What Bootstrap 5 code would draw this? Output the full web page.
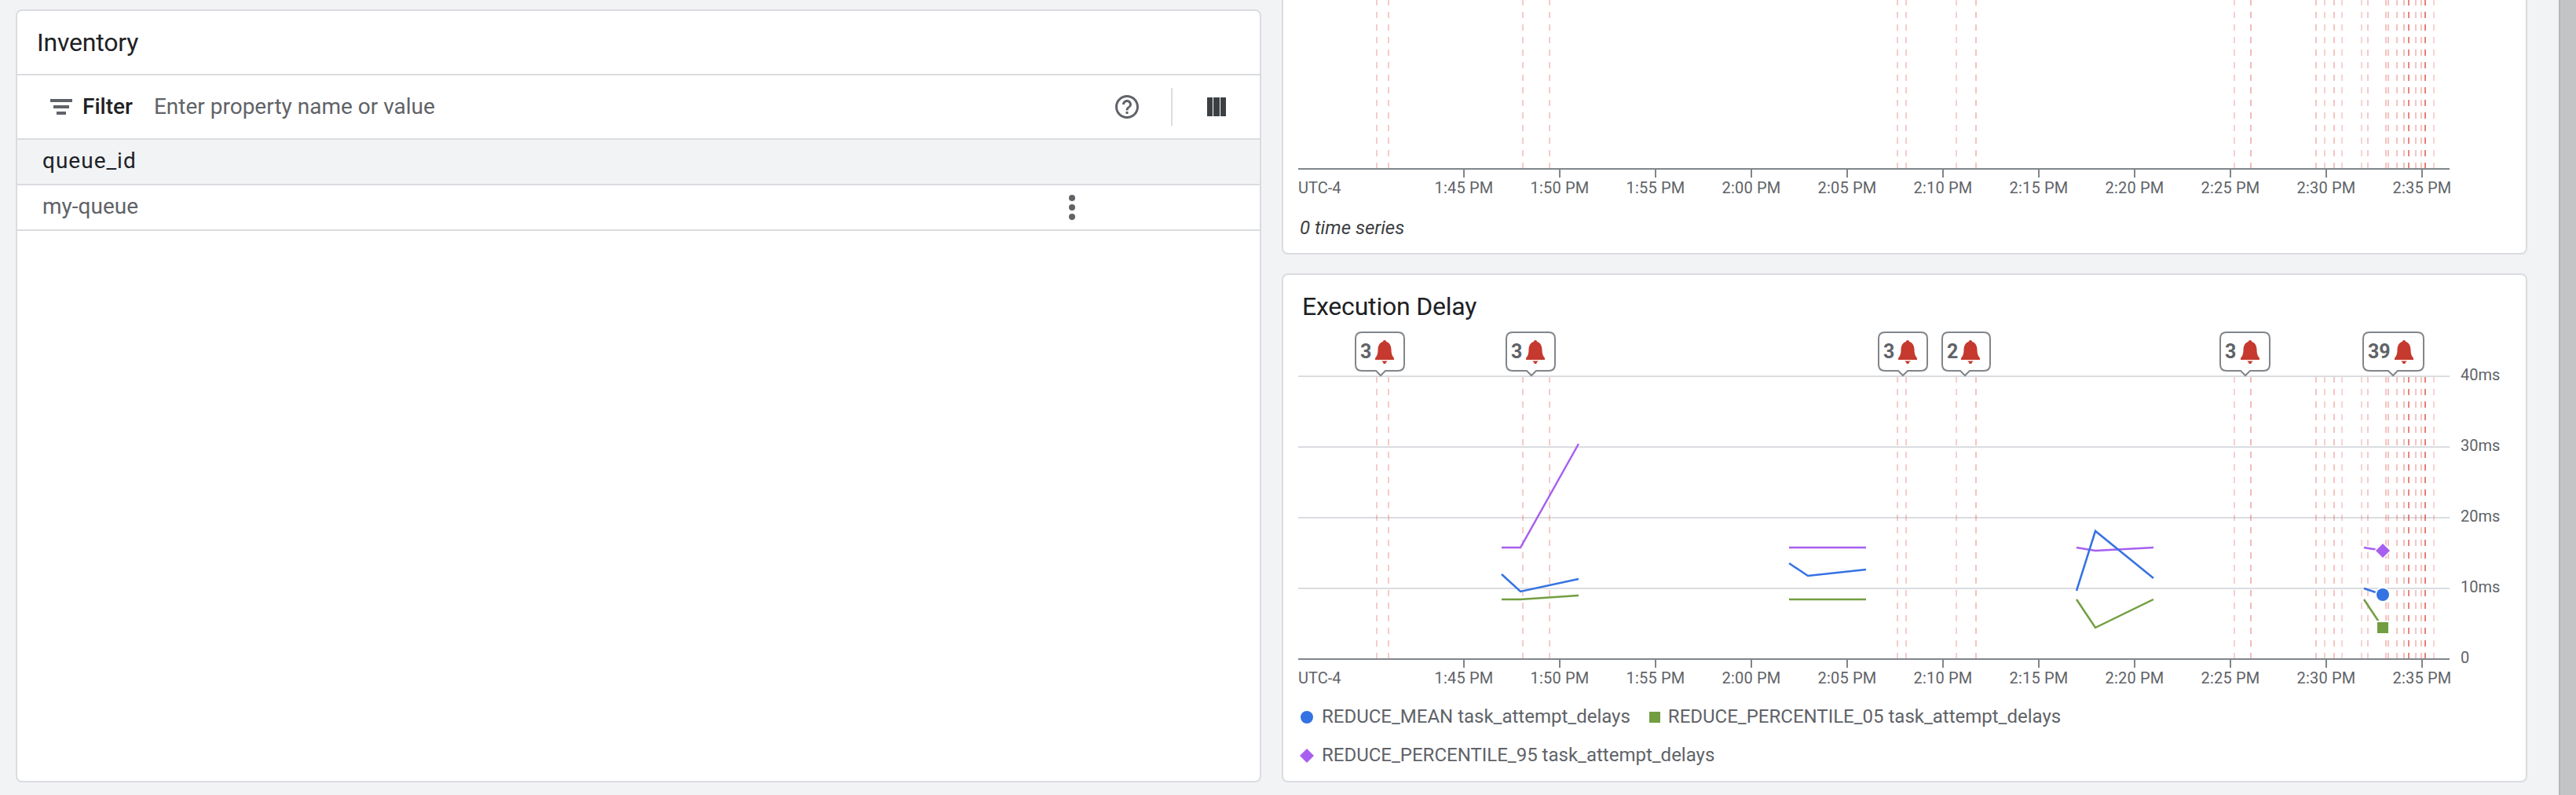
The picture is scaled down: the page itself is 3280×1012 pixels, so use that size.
<!DOCTYPE html>
<html lang="en">
<head>
    <meta charset="UTF-8">
    <meta name="viewport" content="width=device-width, initial-scale=1.0">
    <title>Queue metrics</title>
    <link href="https://cdn.jsdelivr.net/npm/bootstrap@5.3.0/dist/css/bootstrap.min.css" rel="stylesheet">
    <style>
        html, body {
            height: 1012px;
            overflow: hidden;
        }
        body {
            background: #f1f3f4;
            font-family: Roboto, "Liberation Sans", sans-serif;
            color: #202124;
        }
        .page-area {
            height: 1012px;
            padding: 0 40px 16px 20px;
            gap: 26px;
        }
        .page-col {
            flex: 1 1 0;
            min-width: 0;
        }
        .fake-scrollbar {
            flex: none;
            width: 22px;
            background: #c2c4c6;
            border-left: 2px solid #b4b6b8;
        }
        .card {
            --bs-card-border-width: 2px;
            --bs-card-border-color: #dadce0;
            --bs-card-border-radius: 8px;
            --bs-card-inner-border-radius: 6px;
        }
        .inv-card {
            margin-top: 12px;
        }
        .inv-title {
            height: 82px;
            padding: 0 0 0 25px;
            font-size: 32px;
            letter-spacing: -.2px;
            line-height: 80px;
            background: #fff;
        }
        .inv-toolbar {
            height: 82px;
            padding: 0 43px 0 42px;
            border-bottom: 2px solid #dadce0;
        }
        .filter-label {
            margin-left: 13px;
            font-size: 28px;
            font-weight: 500;
        }
        .filter-hint {
            margin-left: 27px;
            font-size: 28px;
            color: #5f6368;
        }
        .tool-sep {
            width: 2px;
            height: 48px;
            margin: 0 44px 0 38px;
            background: #dadce0;
        }
        .inv-table {
            --bs-table-border-color: #dadce0;
            border-collapse: separate;
            border-spacing: 0;
            font-size: 28px;
        }
        .inv-table th, .inv-table td {
            height: 58px;
            padding: 0 0 2px 32px;
            border-bottom-width: 2px;
            vertical-align: middle;
        }
        .inv-table th {
            background: #f1f3f4;
            font-weight: 400;
            letter-spacing: 1px;
            color: #202124;
        }
        .inv-table td {
            color: #5f6368;
        }
        .inv-table .menu-col {
            width: 478px;
            padding: 0;
            text-align: center;
        }
        .top-card {
            height: 324px;
            border-top: 0;
            border-top-left-radius: 0;
            border-top-right-radius: 0;
        }
        .delay-card {
            height: 648px;
        }
        .chart-title {
            margin: 0;
            padding: 20px 0 0 24px;
            font-size: 32px;
            font-weight: 400;
            letter-spacing: -.2px;
            line-height: 40px;
        }
        .chart-note {
            margin: 0;
            padding: 18px 0 0 21px;
            font-size: 24px;
            font-style: italic;
            line-height: 36px;
            color: #3c4043;
        }
        .chart-svg {
            display: block;
            width: 1582px;
        }
        .chart-svg text {
            font-family: Roboto, "Liberation Sans", sans-serif;
            font-size: 20px;
            fill: #5f6368;
        }
        .chart-svg .time-label {
            letter-spacing: .2px;
        }
        .chart-svg .bell-count {
            font-size: 25px;
            font-weight: 700;
        }
        .chart-legend {
            padding-left: 21px;
            column-gap: 24px;
            font-size: 24px;
            line-height: 49px;
            color: #5f6368;
        }
        .key-mark {
            margin-right: 10px;
            flex: none;
        }
    </style>
</head>
<body>
    <div class="d-flex">
        <div class="page-area d-flex flex-grow-1">
            <div class="page-col d-flex">
                <div class="card inv-card flex-grow-1">
                    <div class="card-header inv-title">Inventory</div>
                    <div class="inv-toolbar d-flex align-items-center">
                        <svg width="28" height="20" viewBox="0 0 28 20" fill="#5f6368">
                            <rect width="28" height="4"/><rect x="4" y="8" width="20" height="4"/><rect x="8" y="16" width="12" height="4"/>
                        </svg>
                        <span class="filter-label">Filter</span>
                        <span class="filter-hint">Enter property name or value</span>
                        <svg class="ms-auto" width="36" height="36" viewBox="0 0 24 24" fill="#5f6368">
                            <path d="M11 18h2v-2h-2v2zm1-16C6.48 2 2 6.48 2 12s4.48 10 10 10 10-4.48 10-10S17.52 2 12 2zm0 18c-4.41 0-8-3.59-8-8s3.59-8 8-8 8 3.59 8 8-3.59 8-8 8zm0-14c-2.21 0-4 1.79-4 4h2c0-1.1.9-2 2-2s2 .9 2 2c0 2-3 1.75-3 5h2c0-2.25 3-2.5 3-5 0-2.21-1.79-4-4-4z"/>
                        </svg>
                        <div class="tool-sep"></div>
                        <svg width="24" height="24" viewBox="0 0 24 24" fill="#3c4043">
                            <rect width="7" height="24"/><rect x="8" width="8" height="24"/><rect x="17" width="7" height="24"/>
                        </svg>
                    </div>
                    <table class="table inv-table mb-0">
                        <thead>
                            <tr><th>queue_id</th><th class="menu-col"></th></tr>
                        </thead>
                        <tbody>
                            <tr>
                                <td>my-queue</td>
                                <td class="menu-col">
                                    <svg width="8" height="32" viewBox="0 0 8 32" fill="#5f6368" class="d-block mx-auto">
                                        <circle cx="4" cy="4" r="4"/><circle cx="4" cy="16" r="4"/><circle cx="4" cy="28" r="4"/>
                                    </svg>
                                </td>
                            </tr>
                        </tbody>
                    </table>
                </div>
            </div>
            <div class="page-col d-flex flex-column gap-4">
                <div class="card top-card">
                    <svg id="chart-top" class="chart-svg" viewBox="1634 0 1582 254" height="254"></svg>
                    <p class="chart-note">0 time series</p>
                </div>
                <div class="card delay-card">
                    <h5 class="chart-title">Execution Delay</h5>
                    <svg id="chart-delay" class="chart-svg" viewBox="1634 410 1582 478" height="478"></svg>
                    <div class="chart-legend d-flex flex-wrap">
                        <div class="d-flex align-items-center">
                            <svg class="key-mark" width="18" height="18" viewBox="0 0 18 18"><circle cx="9" cy="9" r="8" fill="#3572e2"/></svg>
                            REDUCE_MEAN task_attempt_delays
                        </div>
                        <div class="d-flex align-items-center">
                            <svg class="key-mark" width="14" height="14" viewBox="0 0 14 14"><rect width="14" height="14" fill="#729e41"/></svg>
                            REDUCE_PERCENTILE_05 task_attempt_delays
                        </div>
                        <div class="d-flex align-items-center w-100">
                            <svg class="key-mark" width="18" height="18" viewBox="0 0 18 18"><path d="M9 0l9 9-9 9-9-9z" fill="#a75ff0"/></svg>
                            REDUCE_PERCENTILE_95 task_attempt_delays
                        </div>
                    </div>
                </div>
            </div>
        </div>
        <div class="fake-scrollbar"></div>
    </div>

<script>
    // x of each incident line, second value is how strong it is
    const incidents = [[1753,.24],[1768,.24],[1939,.24],[1973,.24],[2416,.24],[2427,.24],[2491,.22],[2516,.28],
        [2845,.22],[2866,.32],[2949,.28],[2960,.22],[2972,.28],[2982,.2],[3007,.2],[3015,.24],[3038,.28],[3041,.28],
        [3052,.28],[3061,.32],[3067,.58],[3076,.28],[3083,.28],[3088,.62],[3099,.2]];
    const ticks = ["1:45 PM","1:50 PM","1:55 PM","2:00 PM","2:05 PM","2:10 PM","2:15 PM","2:20 PM","2:25 PM","2:30 PM","2:35 PM"];
    const lineColors = {purple: "#a75ff0", blue: "#3572e2", green: "#729e41"};

    function line(x1, y1, x2, y2, color, extra) {
        return `<line x1="${x1}" y1="${y1}" x2="${x2}" y2="${y2}" stroke="${color}" stroke-width="2" ${extra || ""}/>`;
    }

    function axis(y) {
        let out = line(1653, y, 3119, y, "#80868b");
        out += `<text x="1653" y="${y + 31}">UTC-4</text>`;
        ticks.forEach((label, i) => {
            const x = 1864 + i * 122;
            out += line(x, y, x, y + 11, "#80868b");
            out += `<text class="time-label" x="${x}" y="${y + 31}" text-anchor="middle">${label}</text>`;
        });
        return out;
    }

    function dashes(top, bottom) {
        return incidents.map(([x, strength]) =>
            line(x, bottom, x, top, "#d93025", `stroke-dasharray="8 8" opacity="${strength}"`)).join("");
    }

    function callout(x1, x2, tip, count) {
        const l = x1 + 1, r = x2 - 1, bx = x2 - 38;
        return `<path d="M${l + 8} 423H${r - 8}Q${r} 423 ${r} 431V464Q${r} 472 ${r - 8} 472H${tip + 6}L${tip} 478L${tip - 6} 472H${l + 8}Q${l} 472 ${l} 464V431Q${l} 423 ${l + 8} 423Z" fill="#fff" stroke="#80868b" stroke-width="2"/>`
            + `<text class="bell-count" x="${x1 + 7}" y="456">${count}</text>`
            + `<g transform="translate(${bx} 433)" fill="#c5392e"><path d="M12 0c1.2 0 2 .8 2.2 2C18 3.2 20.5 7 20.5 12c0 3 .5 6 1.5 8l2 3v2H0v-2l2-3c1-2 1.5-5 1.5-8C3.5 7 6 3.2 9.8 2 10 .8 10.8 0 12 0z"/><path d="M8 26.5h8l-2 1.5-.6 2h-2.8l-.6-2z"/></g>`;
    }

    function series(points, color) {
        return `<polyline points="${points}" fill="none" stroke="${lineColors[color]}" stroke-width="2.5"/>`;
    }

    document.getElementById("chart-top").innerHTML = dashes(0, 215) + axis(215);

    let delay = "";
    [479, 569, 659, 749].forEach(y => { delay += line(1653, y, 3119, y, "#dadce0"); });
    delay += dashes(480, 839) + axis(839);
    ["40ms", "30ms", "20ms", "10ms", "0"].forEach((label, i) => {
        delay += `<text x="3133" y="${484 + i * 90}">${label}</text>`;
    });
    delay += series("1912,697 1936,697 2010,565", "purple") + series("1912,731 1936,753 2010,737", "blue") + series("1912,763 1936,763 2010,758", "green");
    delay += series("2278,697 2376,697", "purple") + series("2278,717 2302,733 2376,725", "blue") + series("2278,763 2376,763", "green");
    delay += series("2644,697 2668,701 2742,697", "purple") + series("2644,752 2668,676 2742,736", "blue") + series("2644,763 2668,799 2742,763", "green");
    delay += series("3010,697 3034,701", "purple") + series("3010,749 3034,757", "blue") + series("3010,763 3034,799", "green");
    delay += `<path d="M3034 690l11 11-11 11-11-11z" fill="#fff"/><path d="M3034 692l9 9-9 9-9-9z" fill="#a75ff0"/>`;
    delay += `<circle cx="3034" cy="757" r="10" fill="#fff"/><circle cx="3034" cy="757" r="8" fill="#3572e2"/>`;
    delay += `<rect x="3025" y="790" width="18" height="18" fill="#fff"/><rect x="3027" y="792" width="14" height="14" fill="#729e41"/>`;
    delay += callout(1725, 1789, 1758, "3") + callout(1917, 1981, 1950, "3") + callout(2391, 2455, 2423, "3")
        + callout(2472, 2535, 2502, "2") + callout(2826, 2891, 2859, "3") + callout(3008, 3087, 3047, "39");
    document.getElementById("chart-delay").innerHTML = delay;
</script>
    <script src="https://cdn.jsdelivr.net/npm/bootstrap@5.3.0/dist/js/bootstrap.bundle.min.js"></script>
</body>
</html>
